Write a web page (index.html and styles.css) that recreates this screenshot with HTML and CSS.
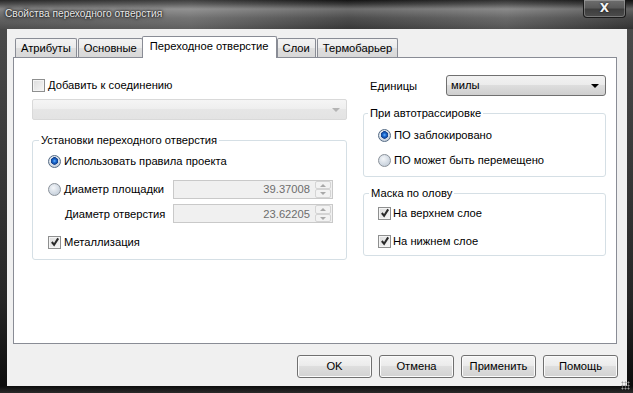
FILE: index.html
```html
<!DOCTYPE html>
<html lang="ru">

<head>
  <meta charset="UTF-8">
  <title>Свойства переходного отверстия</title>
  <link rel="stylesheet" href="styles.css">
</head>

<body>
  <div class="window">
    <div class="titlebar">
      <span class="title">Свойства переходного отверстия</span>
      <div class="close">X</div>
    </div>

    <div class="client">
      <ul class="tabs">
        <li>Атрибуты</li>
        <li>Основные</li>
        <li class="active">Переходное отверстие</li>
        <li>Слои</li>
        <li>Термобарьер</li>
      </ul>

      <div class="panel">
        <!-- левая колонка -->
        <div class="col-left">
          <div class="opt opt-net"><span class="check"></span>Добавить к соединению</div>
          <div class="combo combo-off"><span class="arrow"></span></div>

          <fieldset class="group group-via">
            <legend>Установки переходного отверстия</legend>
            <div class="opt"><span class="radio on"></span>Использовать правила проекта</div>
            <div class="field-row row-pad">
              <div class="opt label"><span class="radio"></span>Диаметр площадки</div>
              <div class="spin"><span class="val">39.37008</span><span class="spin-btns"><i class="up"></i><i class="down"></i></span></div>
            </div>
            <div class="field-row row-hole">
              <div class="label label-indent">Диаметр отверстия</div>
              <div class="spin"><span class="val">23.62205</span><span class="spin-btns"><i class="up"></i><i class="down"></i></span></div>
            </div>
            <div class="opt row-plate"><span class="check on"><svg viewBox="0 0 11 11"><path d="M2 5.5 L4.5 8.5 L9 1.5" /></svg></span>Металлизация</div>
          </fieldset>
        </div>

        <!-- правая колонка -->
        <div class="col-right">
          <div class="units">
            <span class="units-label">Единицы</span>
            <div class="combo combo-units">милы<span class="arrow"></span></div>
          </div>

          <fieldset class="group group-route">
            <legend>При автотрассировке</legend>
            <div class="opt"><span class="radio on"></span>ПО заблокировано</div>
            <div class="opt row-next"><span class="radio"></span>ПО может быть перемещено</div>
          </fieldset>

          <fieldset class="group group-mask">
            <legend>Маска по олову</legend>
            <div class="opt"><span class="check on"><svg viewBox="0 0 11 11"><path d="M2 5.5 L4.5 8.5 L9 1.5" /></svg></span>На верхнем слое</div>
            <div class="opt row-bottom"><span class="check on"><svg viewBox="0 0 11 11"><path d="M2 5.5 L4.5 8.5 L9 1.5" /></svg></span>На нижнем слое</div>
          </fieldset>
        </div>
      </div>

      <div class="buttons">
        <div class="btn">OK</div>
        <div class="btn">Отмена</div>
        <div class="btn">Применить</div>
        <div class="btn">Помощь</div>
      </div>
    </div>

    <div class="grip"></div>
  </div>
</body>

</html>
```

FILE: styles.css
```css
* {
  margin: 0;
  padding: 0;
  box-sizing: border-box;
}

li {
  list-style: none;
}

body {
  background: #101010;
  font-family: "Liberation Sans", Arial, sans-serif;
  font-size: 11.2px;
  color: #000;
}

.window {
  position: relative;
  width: 633px;
  height: 393px;
  background: linear-gradient(180deg, #1e1e1e 0, #4a4a4a 30px, #3a3a3a 150px, #262626 300px, #0c0c0c 386px, #2a2a2a 393px);
  overflow: hidden;
}

/* заголовок окна */
.titlebar {
  display: flex;
  justify-content: space-between;
  height: 29px;
  background:
    linear-gradient(90deg, rgba(255, 255, 255, 0.08) 0, rgba(255, 255, 255, 0.18) 30%, rgba(0, 0, 0, 0.1) 55%, rgba(255, 255, 255, 0.12) 80%, rgba(0, 0, 0, 0.2) 100%),
    linear-gradient(180deg, #151515 0, #3c3c3c 4px, #7a7a7a 9px, #6a6a6a 13px, #555 18px, #4a4a4a 24px, #3d3d3d 29px);
}

.title {
  padding: 8px 0 0 5px;
  font-size: 10.2px;
  color: #e8e8e8;
  text-shadow: 0 0 4px #000, 0 0 2px #000;
}

.close {
  width: 43px;
  height: 18px;
  margin-right: 7px;
  border: 1px solid #1a1a1a;
  border-top: none;
  border-radius: 0 0 4px 4px;
  background: linear-gradient(180deg, #6e6e6e 0, #5a5a5a 45%, #3e3e3e 55%, #4c4c4c 100%);
  box-shadow: inset 0 0 0 1px rgba(255, 255, 255, 0.25);
  color: #f4f4f4;
  font-family: "DejaVu Sans", sans-serif;
  font-weight: bold;
  font-size: 12px;
  line-height: 17px;
  text-align: center;
  text-shadow: 0 0 2px #000;
}

/* клиентская область */
.client {
  width: 620px;
  height: 357px;
  margin-left: 7px;
  padding-top: 7px;
  background: #f0f0f0;
}

.tabs {
  display: flex;
  align-items: flex-end;
  height: 21px;
  padding-left: 8px;
}

.tabs>li {
  height: 19px;
  padding: 0 5px;
  border: 1px solid #898c95;
  border-bottom: none;
  border-radius: 2px 2px 0 0;
  background: linear-gradient(180deg, #f3f3f3 0, #ebebeb 50%, #dedede 50%, #d8d8d8 100%);
  line-height: 18px;
  white-space: nowrap;
}

.tabs>li+li {
  margin-left: 1px;
}

.tabs>li.active {
  position: relative;
  z-index: 1;
  height: 22px;
  margin: 0 -1px -1px -1px;
  padding: 0 7px;
  background: #fff;
  line-height: 19px;
}

.tabs>li.active+li {
  margin-left: 1px;
}

.panel {
  display: flex;
  width: 604px;
  height: 287px;
  margin-left: 6px;
  padding: 17px 0 0 18px;
  border: 1px solid #898c95;
  background: #fff;
}

.col-left {
  width: 315px;
}

.col-right {
  width: 243px;
  margin-left: 16px;
}

/* флажки и переключатели */
.opt {
  display: flex;
  align-items: center;
  height: 20px;
  white-space: nowrap;
}

.check {
  display: inline-flex;
  align-items: center;
  justify-content: center;
  width: 13px;
  height: 13px;
  margin-right: 3px;
  border: 1px solid #8e8f8f;
  background: linear-gradient(135deg, #dcdcdc 0, #f6f6f6 100%);
  box-shadow: inset 0 0 0 1px #f4f4f4;
}

.check svg {
  width: 10px;
  height: 10px;
}

.check path {
  fill: none;
  stroke: #2a2a2a;
  stroke-width: 2.2;
}

.radio {
  width: 13px;
  height: 13px;
  margin-right: 3px;
  border: 1px solid #8a9199;
  border-radius: 50%;
  background: radial-gradient(circle at 40% 35%, #f4f6f9 0, #d9e0e8 45%, #b9c5d2 100%);
}

.radio.on {
  border-color: #556b85;
  background:
    radial-gradient(circle at 50% 45%, #6fb6ff 0, #1d6fd6 1.5px, #123f8c 3.5px, rgba(255, 255, 255, 0) 4px),
    radial-gradient(circle at 40% 35%, #f4f6f9 0, #d9e0e8 45%, #b9c5d2 100%);
}

/* выпадающие списки */
.combo {
  position: relative;
  height: 21px;
  border-radius: 2px;
}

.arrow {
  position: absolute;
  right: 6px;
  top: 8px;
  border-left: 4px solid transparent;
  border-right: 4px solid transparent;
  border-top: 4px solid #000;
}

.combo-off {
  margin-top: 4px;
  border: 1px solid #d9d9d9;
  background: linear-gradient(180deg, #f5f5f5 0, #eeeeee 50%, #e6e6e6 50%, #e3e3e3 100%);
}

.combo-off .arrow {
  border-top-color: #b4b4b4;
}

.combo-units {
  width: 160px;
  padding-left: 4px;
  border: 1px solid #707070;
  border-radius: 3px;
  background: linear-gradient(180deg, #f2f2f2 0, #ebebeb 50%, #dddddd 50%, #cfcfcf 100%);
  line-height: 19px;
}

/* группы */
.group {
  min-width: 0;
  border: 1px solid #d5dfe5;
  border-radius: 3px;
}

.group legend {
  margin-left: -9px;
  padding: 0 2px;
  line-height: 14px;
}

.group-route legend {
  margin-left: -10px;
}

.group-via {
  margin-top: 13px;
  padding: 4px 0 7px 15px;
}

.field-row {
  display: flex;
  align-items: center;
}

.label {
  width: 125px;
}

.label-indent {
  padding-left: 17px;
}

.row-pad {
  margin-top: 8px;
}

.row-hole {
  margin-top: 5px;
}

.row-plate {
  margin-top: 9px;
}

.spin {
  display: flex;
  align-items: center;
  width: 160px;
  height: 19px;
  border: 1px solid #c9c9c9;
  background: #f0f0f0;
  color: #6d6d6d;
}

.val {
  flex: 1;
  padding-right: 5px;
  text-align: right;
}

.spin-btns {
  display: flex;
  flex-direction: column;
  width: 16px;
  height: 17px;
  margin-right: 1px;
}

.spin-btns i {
  position: relative;
  flex: 1;
  border: 1px solid #d4d4d4;
  border-radius: 2px;
  background: #f2f2f2;
}

.spin-btns i::after {
  content: "";
  position: absolute;
  left: 4px;
  top: 2px;
  border-left: 3px solid transparent;
  border-right: 3px solid transparent;
}

.spin-btns .up::after {
  border-bottom: 3px solid #a8a8a8;
}

.spin-btns .down::after {
  top: 2px;
  border-top: 3px solid #a8a8a8;
}

.units {
  display: flex;
  align-items: center;
  justify-content: space-between;
  padding-left: 7px;
}

.group-route {
  margin-top: 10px;
  padding: 5px 0 6px 14px;
}

.row-next {
  margin-top: 5px;
}

.group-mask {
  margin-top: 9px;
  padding: 3px 0 4px 14px;
}

.group-mask .check {
  margin-right: 2px;
}

.row-bottom {
  margin-top: 8px;
}

/* кнопки */
.buttons {
  display: flex;
  justify-content: flex-end;
  gap: 7px;
  margin-top: 11px;
  padding-right: 9px;
}

.btn {
  width: 75px;
  height: 23px;
  border: 1px solid #707070;
  border-radius: 3px;
  background: linear-gradient(180deg, #f4f4f4 0, #ececec 45%, #dedede 50%, #d2d2d2 100%);
  box-shadow: inset 0 0 0 1px #fbfbfb;
  line-height: 21px;
  text-align: center;
}

.grip {
  position: absolute;
  right: 3px;
  bottom: 3px;
  width: 9px;
  height: 9px;
  background: radial-gradient(circle, #9a9a9a 0.8px, transparent 1.2px) 0 0 / 3px 3px;
}
```
